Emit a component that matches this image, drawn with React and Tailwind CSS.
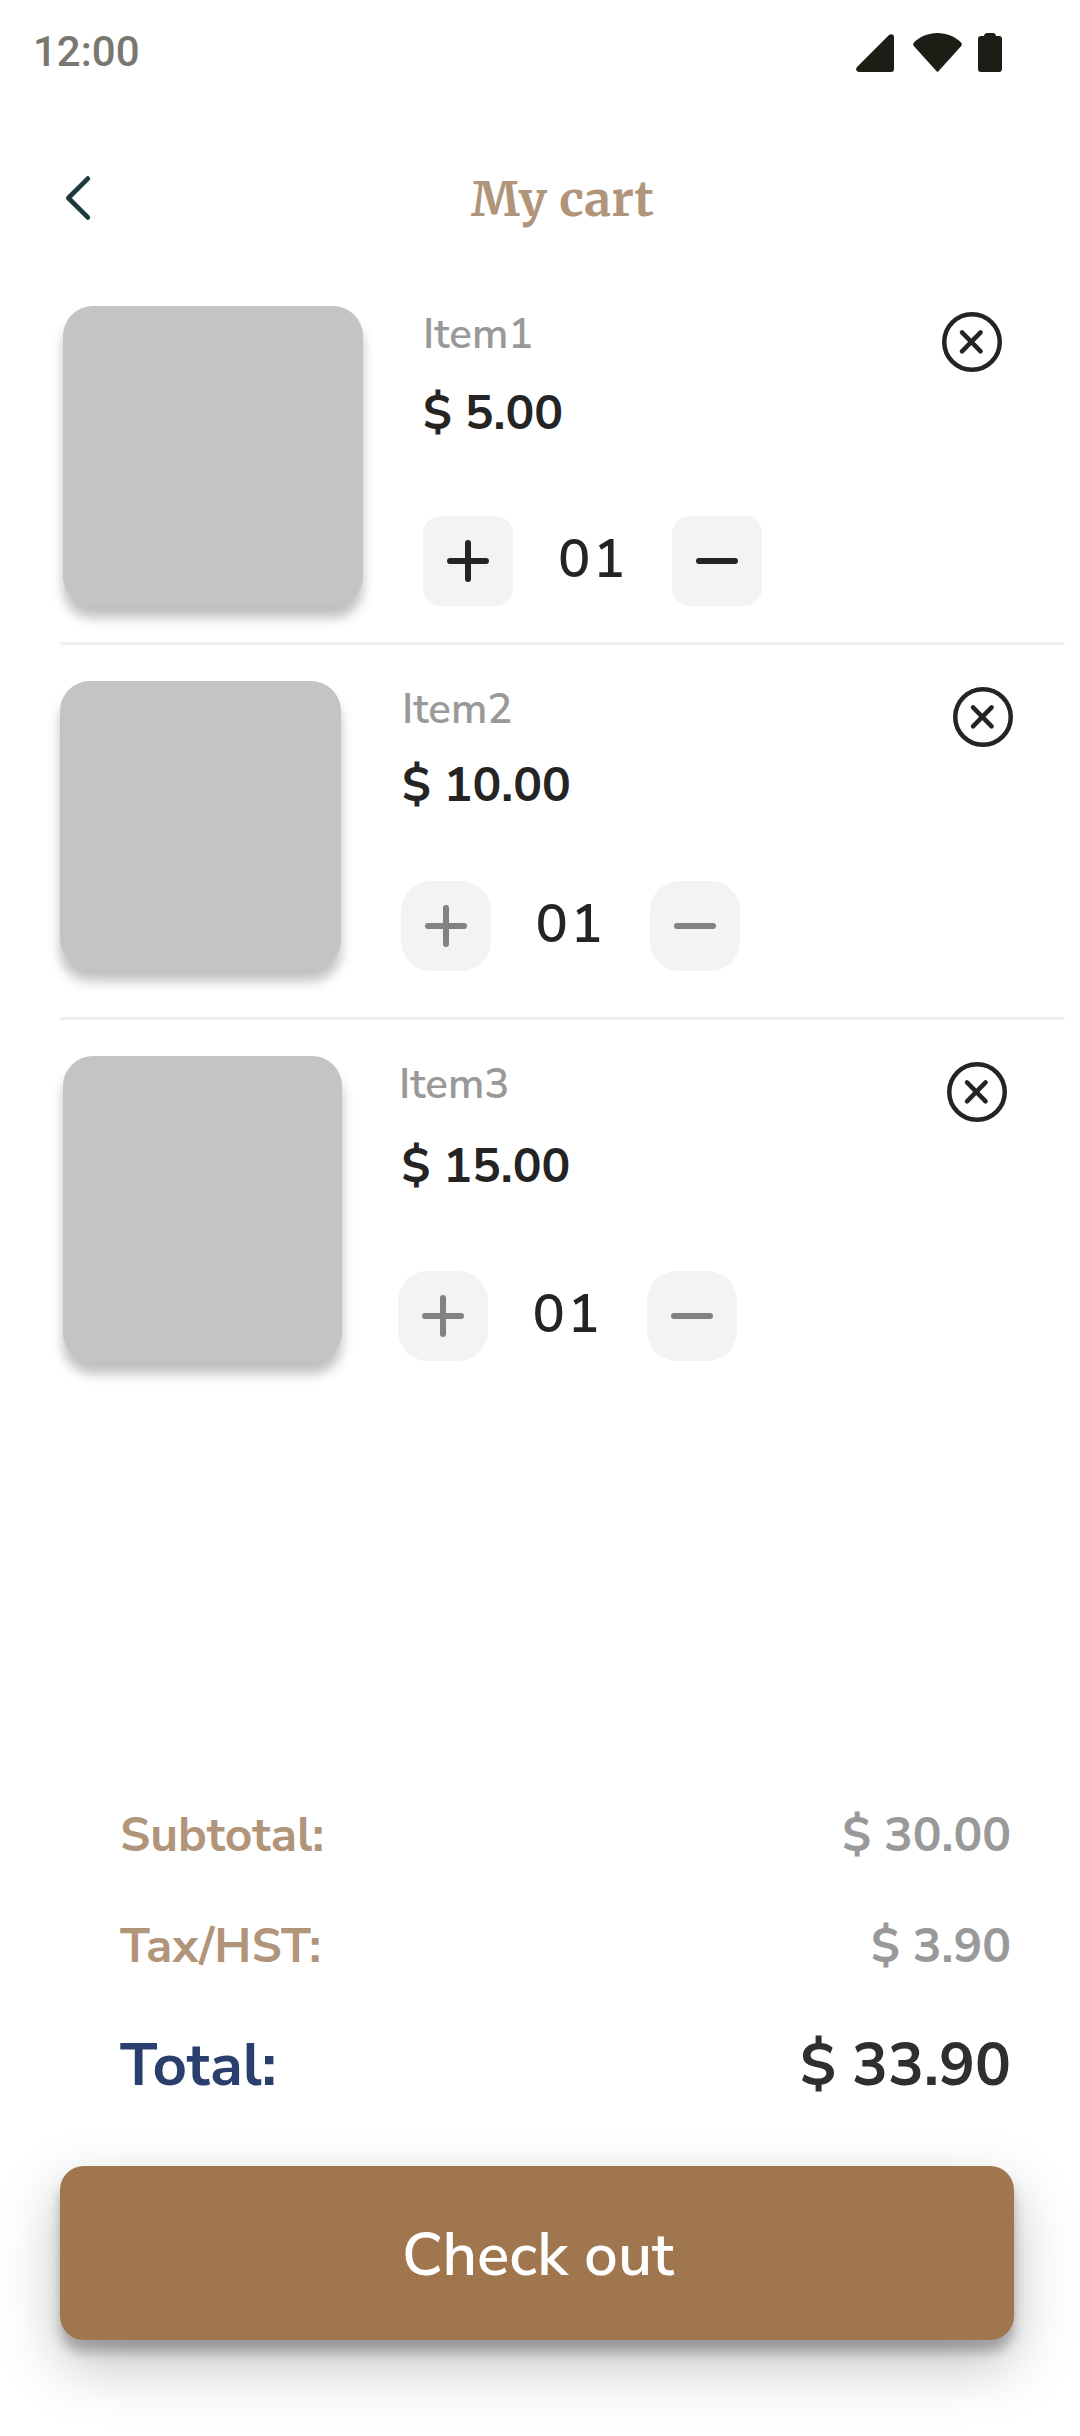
import React from "react";

const items = [
  {
    name: "Item1",
    price: "$ 5.00",
    image: "ml-[63px] w-[300px] h-[300px]",
    details: "ml-[60px]",
    label: "",
    amount: "mt-[16px]",
    stepper: "mt-[70px]",
    button: "rounded-[18px] text-[#242424]",
    close: "mr-[78px]",
  },
  {
    name: "Item2",
    price: "$ 10.00",
    image: "ml-[60px] w-[281px] h-[288px]",
    details: "ml-[59.5px]",
    label: "pl-[1.5px]",
    amount: "mt-[13px] pl-[1.5px]",
    stepper: "mt-[63px]",
    button: "rounded-[30px] text-[#828282]",
    close: "mr-[67.5px]",
  },
  {
    name: "Item3",
    price: "$ 15.00",
    image: "ml-[63px] w-[279px] h-[306px]",
    details: "ml-[55.5px]",
    label: "pl-[1.5px]",
    amount: "mt-[19px] pl-[4px]",
    stepper: "mt-[72px]",
    button: "rounded-[30px] text-[#828282]",
    close: "mr-[73px]",
  },
];

const totals = [
  { label: "Subtotal:", value: "$ 30.00" },
  { label: "Tax/HST:", value: "$ 3.90" },
];

function StatusBar() {
  return (
    <div className="flex h-[76px] items-start justify-between pl-[33px] pr-[78px] pt-[27px]">
      <span className="font-['Roboto',sans-serif] text-[42px] leading-[49px] font-medium text-[#797870]">
        12:00
      </span>
      <div className="mt-[6px] flex items-start text-[#1d1d15]">
        <svg className="mt-px h-[38px] w-[38px]" viewBox="0 0 38 38" fill="currentColor">
          <path d="M33 1 Q35 -0.6 37 0.8 Q38 1.6 38 3 V35 Q38 38 35 38 H3 Q1 38 0.3 36.3 Q-0.3 34.6 1 33 Z" />
        </svg>
        <svg className="ml-[19px] h-[39px] w-[49px]" viewBox="0 0 49 39" fill="currentColor">
          <path d="M1 9.5 C7 3.4 15.3 0 24.5 0 C33.700 0 42 3.400 48 9.500 Q49.700 11.200 48.200 13 L25.200 38.400 Q24.500 39.200 23.800 38.400 L0.800 13 Q-0.700 11.200 1 9.500 Z" />
        </svg>
        <svg className="ml-[16px] h-[39px] w-[24px]" viewBox="0 0 24 39" fill="currentColor">
          <path d="M6 3 Q6.500 0 9 0 H15 Q17.500 0 18 3 H21 Q24 3 24 6 V36 Q24 39 21 39 H3 Q0 39 0 36 V6 Q0 3 3 3 Z" />
        </svg>
      </div>
    </div>
  );
}

function Header() {
  return (
    <header className="flex h-[230px] items-start pt-[93px]">
      <button className="mt-[6px] ml-[64px]" aria-label="Back">
        <svg
          className="h-[46px] w-[28px]"
          viewBox="0 0 28 46"
          fill="none"
          stroke="#20383f"
          strokeWidth="4.8"
          strokeLinecap="round"
          strokeLinejoin="round"
        >
          <path d="M23.800 3.600 L4.400 23 L23.800 42.400" />
        </svg>
      </button>
      <h1 className="ml-[379px] font-['Merriweather','Noto_Serif',serif] text-[48px] leading-[60px] font-bold tracking-[0.5px] text-[#b1957a]">
        My cart
      </h1>
    </header>
  );
}

function StepButton({ kind, className }) {
  return (
    <button
      className={`flex h-[90px] w-[90px] items-center justify-center bg-[#f3f3f3] ${className}`}
      aria-label={kind}
    >
      <svg
        className="h-[42px] w-[42px]"
        viewBox="0 0 42 42"
        fill="none"
        stroke="currentColor"
        strokeWidth="6"
        strokeLinecap="round"
      >
        <path d={kind === "plus" ? "M3 21 H39 M21 3 V39" : "M3 21 H39"} />
      </svg>
    </button>
  );
}

function CloseIcon() {
  return (
    <svg
      className="h-[60px] w-[60px]"
      viewBox="0 0 60 60"
      fill="none"
      stroke="#242424"
      strokeWidth="4.500"
      strokeLinecap="round"
    >
      <circle cx="30" cy="30" r="27.750" />
      <path d="M20 20.400 L38.600 39.400 M38.600 20.400 L20 39.400" />
    </svg>
  );
}

function CartItem({ item }) {
  return (
    <div className="flex h-[336px] items-start">
      <div
        className={`shrink-0 rounded-[30px] bg-[#c4c4c4] shadow-[0_12px_12px_rgba(0,0,0,0.25)] ${item.image}`}
      />
      <div className={`flex flex-col ${item.details}`}>
        <span className={`text-[42px] leading-[58px] font-semibold text-[#999999] ${item.label}`}>
          {item.name}
        </span>
        <span className={`text-[48px] leading-[66px] font-bold text-[#242424] ${item.amount}`}>
          {item.price}
        </span>
        <div className={`grid h-[90px] grid-cols-[90px_69px_90px] gap-[45px] ${item.stepper}`}>
          <StepButton kind="plus" className={item.button} />
          <span className="text-[54px] leading-[87px] font-semibold tracking-[2.7px] whitespace-nowrap text-[#242424]">
            01
          </span>
          <StepButton kind="minus" className={item.button} />
        </div>
      </div>
      <button className={`mt-[6px] ml-auto ${item.close}`} aria-label="Remove">
        <CloseIcon />
      </button>
    </div>
  );
}

export default function App() {
  return (
    <div className="flex h-[2436px] w-[1080px] flex-col overflow-hidden bg-white font-['Nunito_Sans','Nunito','Lato',sans-serif]">
      <StatusBar />
      <Header />
      <main>
        {items.map((item, i) => (
          <React.Fragment key={item.name}>
            {i > 0 && <div className="mr-[15px] mb-[36px] ml-[60px] h-[3px] rounded-full bg-[#efefef]" />}
            <CartItem item={item} />
          </React.Fragment>
        ))}
      </main>
      <section className="mt-[410px] flex flex-col gap-[45px] pr-[69px] pl-[120px]">
        {totals.map((row) => (
          <div
            key={row.label}
            className="flex justify-between text-[48px] leading-[66px] font-bold"
          >
            <span className="text-[#b1957a]">{row.label}</span>
            <span className="text-[#999999]">{row.value}</span>
          </div>
        ))}
        <div className="flex justify-between text-[60px] leading-[82px] font-bold">
          <span className="text-[#2a3f6d]">Total:</span>
          <span className="text-[#2f2f2f]">$ 33.90</span>
        </div>
      </section>
      <button className="mt-[60px] ml-[60px] flex h-[174px] w-[954px] shrink-0 items-center justify-center rounded-[24px] bg-[#a0764e] pt-[4px] pl-[2px] text-[60px] leading-[82px] font-semibold text-white shadow-[0_12px_12px_rgba(0,0,0,0.25),0_24px_60px_rgba(0,0,0,0.25)]">
        Check out
      </button>
    </div>
  );
}
